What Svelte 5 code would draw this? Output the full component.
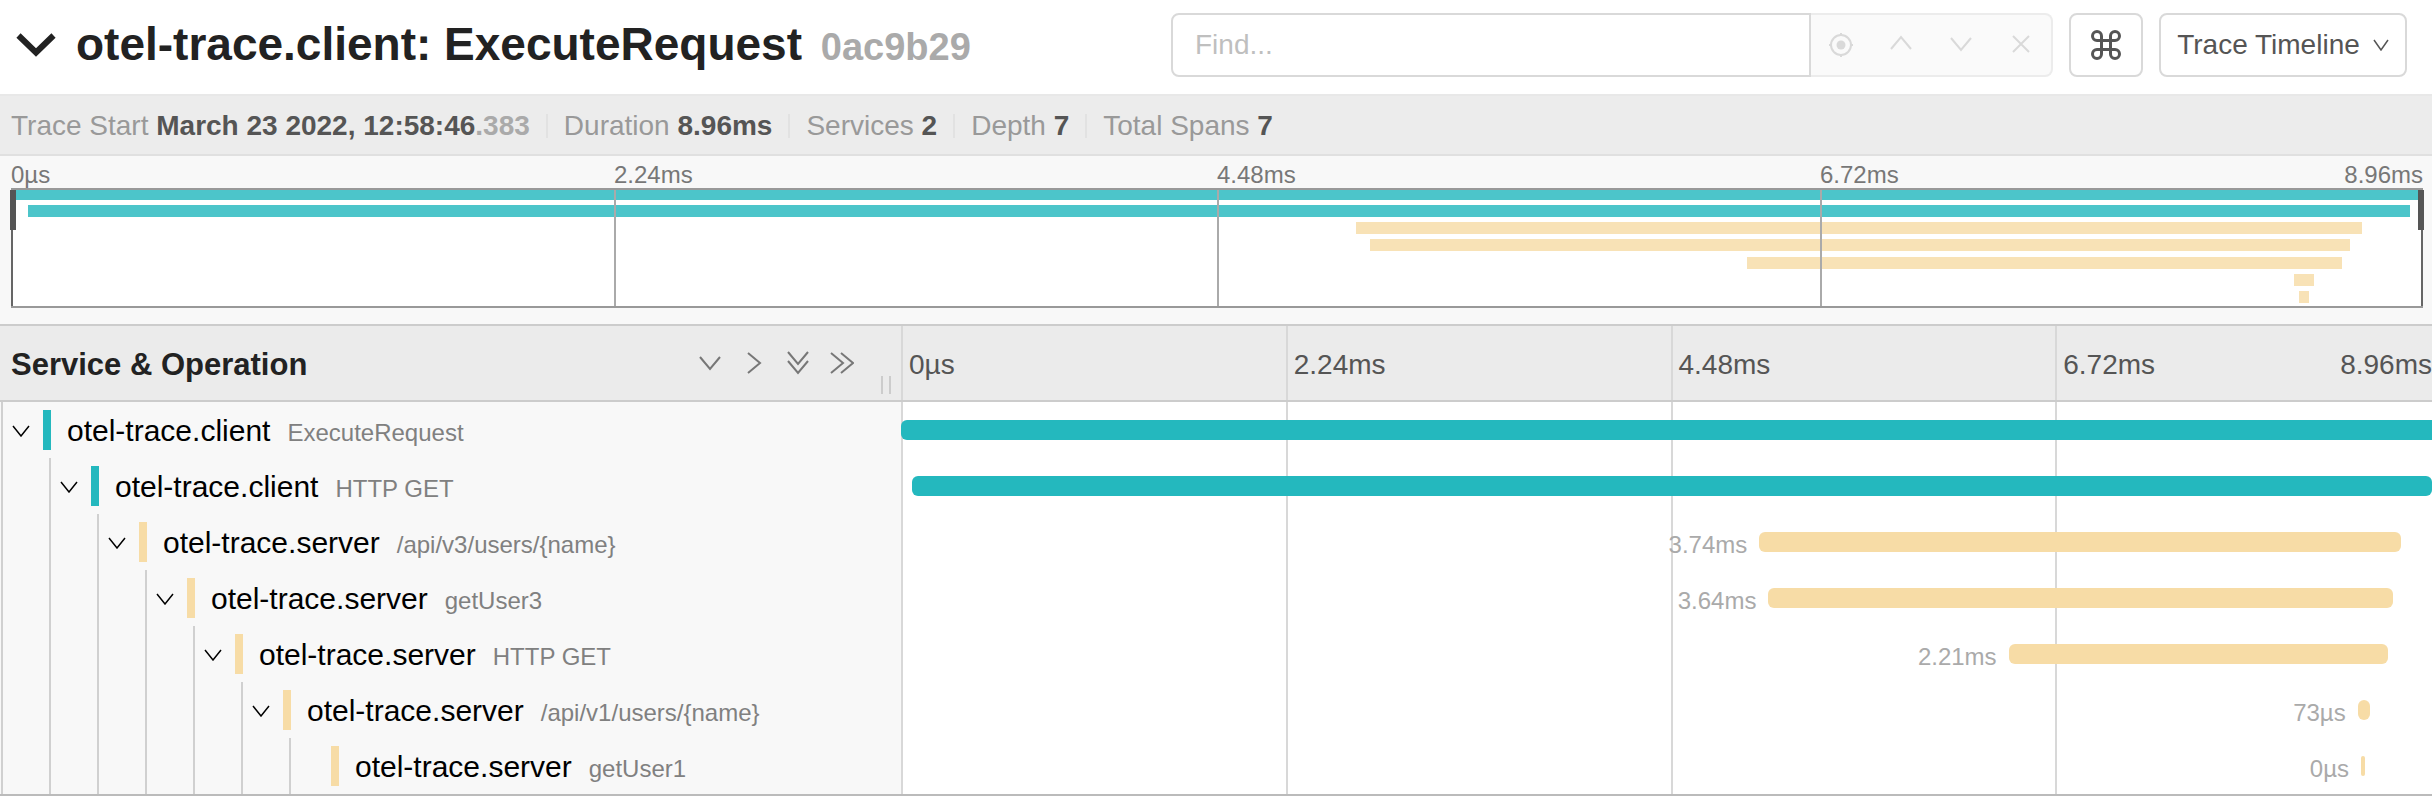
<script lang="ts">
  const teal = '#24b8be';
  const sand = '#f7dca6';
  const ticks = ['0µs', '2.24ms', '4.48ms', '6.72ms'];
  const total = '8.96ms';
  const facts = [
    { label: 'Duration', value: '8.96ms' },
    { label: 'Services', value: '2' },
    { label: 'Depth', value: '7' },
    { label: 'Total Spans', value: '7' },
  ];
  // start and end are percentages of the trace duration
  const spans = [
    { service: 'otel-trace.client', op: 'ExecuteRequest', color: teal, start: 0, end: 100, label: '' },
    { service: 'otel-trace.client', op: 'HTTP GET', color: teal, start: 0.7, end: 99.45, label: '' },
    { service: 'otel-trace.server', op: '/api/v3/users/{name}', color: sand, start: 55.77, end: 97.47, label: '3.74ms' },
    { service: 'otel-trace.server', op: 'getUser3', color: sand, start: 56.36, end: 96.97, label: '3.64ms' },
    { service: 'otel-trace.server', op: 'HTTP GET', color: sand, start: 71.97, end: 96.65, label: '2.21ms' },
    { service: 'otel-trace.server', op: '/api/v1/users/{name}', color: sand, start: 94.65, end: 95.48, label: '73µs' },
    { service: 'otel-trace.server', op: 'getUser1', color: sand, start: 94.87, end: 94.87, label: '0µs' },
  ];
</script>

<div class="page">
  <header class="top">
    <button class="plain toggle" aria-label="Collapse header">
      <svg width="40" height="26" viewBox="0 0 40 26"><path d="M2.500 3.500 20 20.500 37.500 3.500" fill="none" stroke="currentColor" stroke-width="6" /></svg>
    </button>
    <h1>otel-trace.client: ExecuteRequest <small>0ac9b29</small></h1>
    <div class="search">
      <input type="text" placeholder="Find..." aria-label="Find" />
      <div class="group">
        <button class="plain" disabled aria-label="Locate">
          <svg width="26" height="26" viewBox="0 0 26 26" fill="none" stroke="currentColor" stroke-width="2"><circle cx="13" cy="13" r="10" /><circle cx="13" cy="13" r="4.500" fill="currentColor" stroke="none" /><path d="M13 1v3M13 22v3M1 13h3M22 13h3" /></svg>
        </button>
        <button class="plain" disabled aria-label="Previous">
          <svg width="22" height="22" viewBox="0 0 22 22" fill="none" stroke="currentColor" stroke-width="2"><path d="M1 15 11 3 21 15" /></svg>
        </button>
        <button class="plain" disabled aria-label="Next">
          <svg width="22" height="22" viewBox="0 0 22 22" fill="none" stroke="currentColor" stroke-width="2"><path d="M1 4 11 16 21 4" /></svg>
        </button>
        <button class="plain" disabled aria-label="Clear">
          <svg width="22" height="22" viewBox="0 0 22 22" fill="none" stroke="currentColor" stroke-width="2"><path d="M3 2 19 18M19 2 3 18" /></svg>
        </button>
      </div>
    </div>
    <button class="boxed command" aria-label="Keyboard shortcuts">
      <svg width="32" height="32" viewBox="0 0 32 32" fill="none" stroke="currentColor" stroke-width="3"><path d="M11.500 7A4.500 4.500 0 1 0 7 11.500H25A4.500 4.500 0 1 0 20.500 7V25A4.500 4.500 0 1 0 25 20.500H7A4.500 4.500 0 1 0 11.500 25Z" /></svg>
    </button>
    <button class="boxed view">
      Trace Timeline
      <svg width="16" height="12" viewBox="0 0 16 12" fill="none" stroke="currentColor" stroke-width="1.500"><path d="M1 1 8 11 15 1" /></svg>
    </button>
  </header>

  <ul class="facts">
    <li>Trace Start <strong>March 23 2022, 12:58:46<span>.383</span></strong></li>
    {#each facts as fact}
      <li>{fact.label} <strong>{fact.value}</strong></li>
    {/each}
  </ul>

  <section class="overview">
    <div class="scale">
      {#each ticks as tick, i}
        <div><span>{tick}</span>{#if i === 3}<span>{total}</span>{/if}</div>
      {/each}
    </div>
    <div class="map">
      {#each spans as span}
        <div class="lane">
          <i style:margin-left="{span.start}%" style:width="{span.end - span.start}%" style:background={span.color}></i>
        </div>
      {/each}
      <div class="frame">
        {#each ticks as _}<div></div>{/each}
      </div>
      <b class="handle"></b>
      <b class="handle end"></b>
    </div>
  </section>

  <section class="timeline">
    <div class="row head">
      <div class="headname">
        <h2>Service &amp; Operation</h2>
        <div class="tools">
          <button class="plain" aria-label="Expand +1"><svg width="24" height="24" viewBox="0 0 24 24"><path d="M2 6 12 18 22 6" /></svg></button>
          <button class="plain" aria-label="Collapse +1"><svg width="24" height="24" viewBox="0 0 24 24"><path d="M6 2 18 12 6 22" /></svg></button>
          <button class="plain" aria-label="Expand All"><svg width="24" height="24" viewBox="0 0 24 24"><path d="M2 1 12 13 22 1M2 10 12 22 22 10" /></svg></button>
          <button class="plain" aria-label="Collapse All"><svg width="24" height="24" viewBox="0 0 24 24"><path d="M1 2 13 12 1 22M11 2 23 12 11 22" /></svg></button>
        </div>
        <div class="grip"></div>
      </div>
      <div class="grid">
        {#each ticks as tick, i}
          <div><span>{tick}</span>{#if i === 3}<span>{total}</span>{/if}</div>
        {/each}
      </div>
    </div>

    {#each spans as span, depth}
      <div class="row">
        <div class="name">
          {#each { length: depth } as _}<div class="guide"></div>{/each}
          <div class="guide leaf">
            {#if depth < spans.length - 1}
              <button class="plain" aria-label="Toggle children">
                <svg width="18" height="12" viewBox="0 0 18 12" fill="none" stroke="currentColor" stroke-width="1.500"><path d="M1 1 9 11 17 1" /></svg>
              </button>
            {/if}
          </div>
          <button class="plain service" style:border-color={span.color}>{span.service} <small>{span.op}</small></button>
        </div>
        <div class="track">
          <div class="grid lines">
            {#each ticks as _}<div></div>{/each}
          </div>
          <div class="bars">
            <div class="before" style:width="{span.start}%">{span.label}</div>
            <div class="bar" style:width="{span.end - span.start}%" style:background={span.color}></div>
          </div>
        </div>
      </div>
    {/each}
  </section>
</div>

<style>
  :global(body) {
    margin: 0;
    background: #fff;
  }
  * {
    box-sizing: border-box;
  }
  .page {
    font-family: 'Liberation Sans', Arial, sans-serif;
    font-size: 28px;
    color: #555;
    overflow: hidden;
  }
  svg {
    display: block;
  }
  .plain {
    display: flex;
    align-items: center;
    justify-content: center;
    margin: 0;
    padding: 0;
    border: 0;
    background: none;
    color: inherit;
    font: inherit;
  }
  .top {
    display: flex;
    align-items: center;
    height: 96px;
    padding: 0 25px 4px 16px;
    border-bottom: 2px solid #e8e8e8;
  }
  .toggle {
    color: #222;
  }
  h1 {
    flex: 1;
    margin: 0 0 0 20px;
    font-size: 46px;
    line-height: 64px;
    color: #222;
    white-space: nowrap;
  }
  h1 small {
    margin-left: 6px;
    font-size: 38px;
    color: #aaa;
  }
  .search {
    display: flex;
    height: 64px;
  }
  input {
    width: 640px;
    padding: 0 22px;
    border: 2px solid #d9d9d9;
    border-radius: 8px 0 0 8px;
    background: #fff;
    font: inherit;
    color: #555;
  }
  input::placeholder {
    color: #bfbfbf;
  }
  .group {
    display: flex;
    width: 242px;
    border: 2px solid #ececec;
    border-left: 0;
    border-radius: 0 8px 8px 0;
    background: #fafafa;
    color: #d9d9d9;
  }
  .group button {
    flex: 1;
  }
  .boxed {
    display: flex;
    align-items: center;
    justify-content: center;
    gap: 13px;
    height: 64px;
    margin: 0 0 0 16px;
    padding: 0;
    border: 2px solid #d9d9d9;
    border-radius: 8px;
    background: #fff;
    color: #555;
    font: inherit;
  }
  .command {
    width: 74px;
  }
  .view {
    width: 248px;
    white-space: nowrap;
  }
  .facts {
    display: flex;
    align-items: center;
    height: 60px;
    margin: 0;
    padding: 2px 0 0 11px;
    border-bottom: 2px solid #e0e0e0;
    background: #ececec;
    color: #999;
    list-style: none;
    white-space: nowrap;
  }
  .facts li {
    line-height: 24px;
  }
  .facts li + li {
    margin-left: 16px;
    padding-left: 16px;
    border-left: 2px solid #e2e2e2;
  }
  strong {
    color: #555;
  }
  strong span {
    color: #aaa;
  }
  .overview {
    padding: 0 9px 16px 11px;
    background: #f8f8f8;
  }
  .scale {
    display: grid;
    grid-template-columns: repeat(4, 1fr);
    height: 32px;
    font-size: 24px;
    line-height: 38px;
    color: #777;
  }
  .scale div {
    display: flex;
    justify-content: space-between;
  }
  .map {
    position: relative;
    display: flex;
    flex-direction: column;
    height: 120px;
    background: #fff;
  }
  .lane {
    flex: 1;
  }
  .lane i {
    display: block;
    height: 12px;
    min-width: 10px;
    opacity: 0.82;
  }
  .frame {
    position: absolute;
    inset: 0;
    display: grid;
    grid-template-columns: repeat(4, 1fr);
    border: 2px solid #999;
    border-width: 2px 0;
  }
  .frame div {
    border-left: 2px solid #aaa;
  }
  .frame div:first-child {
    border-color: #666;
  }
  .frame div:last-child {
    border-right: 2px solid #666;
  }
  .handle {
    position: absolute;
    top: 2px;
    left: -1px;
    width: 6px;
    height: 40px;
    background: #555;
  }
  .handle.end {
    right: -1px;
    left: auto;
  }
  .timeline {
    margin-right: -8px;
    border-top: 2px solid #ccc;
    border-bottom: 2px solid #bbb;
  }
  .row {
    display: grid;
    grid-template-columns: minmax(0, 901fr) minmax(0, 1539fr);
    height: 56px;
    background: #fff;
  }
  .head {
    height: 76px;
    border-bottom: 2px solid #ccc;
    background: #ebebeb;
  }
  .headname {
    display: flex;
    align-items: center;
    padding: 0 10px 0 11px;
  }
  h2 {
    flex: 1;
    margin: 0;
    padding-top: 4px;
    font-size: 31px;
    line-height: 40px;
    color: #222;
    white-space: nowrap;
  }
  .tools {
    display: flex;
    gap: 20px;
    color: #777;
  }
  .tools path {
    fill: none;
    stroke: currentColor;
    stroke-width: 2;
  }
  .grip {
    align-self: flex-end;
    width: 10px;
    height: 18px;
    margin: 0 0 6px 27px;
    border: 2px solid #ccc;
    border-width: 0 2px;
  }
  .grid {
    display: grid;
    grid-template-columns: repeat(4, 1fr);
  }
  .grid div {
    display: flex;
    align-items: center;
    justify-content: space-between;
    padding: 4px 8px 0 6px;
    border-left: 2px solid #d8d8d8;
  }
  .name {
    display: flex;
    align-items: center;
    padding-left: 1px;
    background: #f8f8f8;
  }
  .guide {
    display: flex;
    align-items: center;
    align-self: stretch;
    flex: 0 0 48px;
    border-left: 2px solid #d0d0d0;
  }
  .leaf {
    flex-basis: 42px;
    padding: 2px 0 0 9px;
    color: #000;
  }
  .service {
    align-items: baseline;
    gap: 17px;
    height: 40px;
    padding: 2px 0 0 16px;
    border-left: 8px solid;
    font-size: 30px;
    line-height: 38px;
    white-space: nowrap;
  }
  .name .service {
    color: #000;
  }
  .service small {
    font-size: 24px;
    color: #808080;
  }
  .track {
    position: relative;
    display: grid;
  }
  .lines {
    position: absolute;
    inset: 0;
  }
  .bars {
    position: relative;
    display: flex;
    align-items: center;
  }
  .before {
    display: flex;
    justify-content: flex-end;
    padding: 6px 12px 0 0;
    font-size: 24px;
    line-height: 28px;
    color: #aaa;
  }
  .before:empty {
    padding: 0;
  }
  .bar {
    height: 20px;
    min-width: 4px;
    border-radius: 6px;
  }
</style>
